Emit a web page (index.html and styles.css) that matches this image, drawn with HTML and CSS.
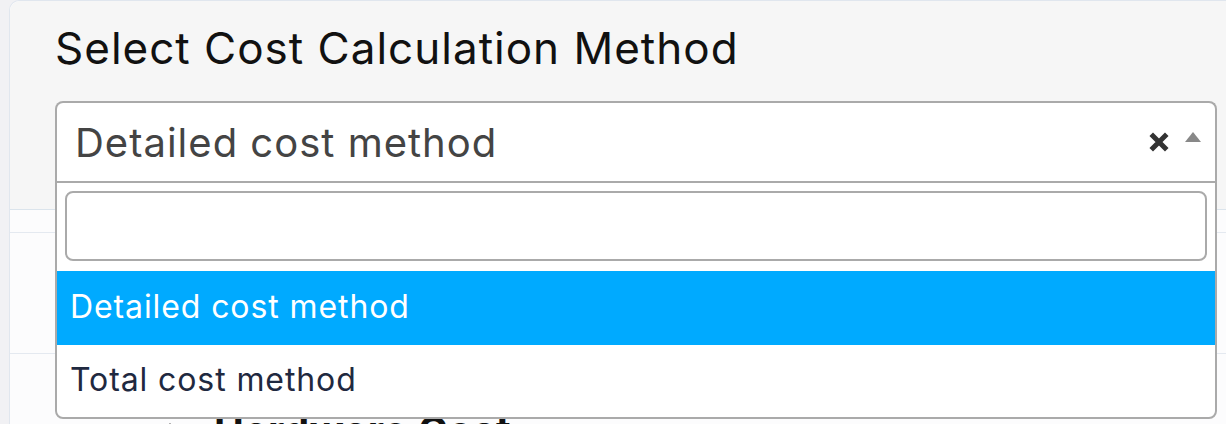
FILE: index.html
```html
<!DOCTYPE html>
<html lang="en">
<head>
  <meta charset="UTF-8" />
  <meta name="viewport" content="width=device-width, initial-scale=1.0"/>
  <title>Cost Calculation</title>
  <link rel="stylesheet" href="styles.css">
</head>
<body>

  <div class="card">
    <div class="card-header">
      <h2 class="card-title">Select Cost Calculation Method</h2>

      <div class="select-wrap">
        <div class="selection">
          <span class="selection-value">Detailed cost method</span>
          <span class="selection-clear">
            <svg width="20" height="20" viewBox="0 0 20 20">
              <path d="M4 4 L16 16 M16 4 L4 16" stroke="#333" stroke-width="5" stroke-linecap="square"/>
            </svg>
          </span>
          <span class="selection-arrow">
            <svg width="16" height="12" viewBox="0 0 16 12">
              <polygon points="0,12 8,2 16,12" fill="#888"/>
            </svg>
          </span>
        </div>

        <div class="dropdown">
          <div class="dropdown-search">
            <input type="text" class="search-field" />
          </div>
          <ul class="results">
            <li class="result-item highlighted">Detailed cost method</li>
            <li class="result-item">Total cost method</li>
          </ul>
        </div>
      </div>
    </div>

    <div class="card-body">
      <div class="cost-row"></div>
      <div class="cost-section">
        <span class="chevron">
          <svg width="24" height="20" viewBox="0 0 24 20">
            <path d="M3 16 L12 7 L21 16" stroke="#111" stroke-width="4" fill="none"/>
          </svg>
        </span>
        <span class="cost-label">Hardware Cost</span>
      </div>
    </div>
  </div>

</body>
</html>
```

FILE: styles.css
```css
body {
  margin: 0;
  padding-left: 9px;
  background: #f1f1f4;
  font-family: Inter, "Open Sans", sans-serif;
  overflow: hidden;
  height: 424px;
}

/* Card */
.card {
  margin-right: -14px;
  background: #fcfcfd;
  border: 1px solid #e0e6ee;
  border-bottom: none;
  border-radius: 10px 10px 0 0;
  height: 460px;
}

.card-header {
  background: #f6f6f6;
  border-bottom: 1px solid #dbe4ec;
  border-radius: 10px 10px 0 0;
  padding: 22px 22px 26px 45px;
}

.card-title {
  margin: 0 0 28px 0;
  font-size: 44px;
  font-weight: 400;
  line-height: 50px;
  color: #111;
  letter-spacing: 1px;
}

/* Select box */
.select-wrap {
  position: relative;
}

.selection {
  display: flex;
  align-items: center;
  height: 80px;
  background: #fff;
  border: 2px solid #aaa;
  border-bottom-width: 0;
  border-radius: 8px 8px 0 0;
  padding: 0 14px 0 18px;
}

.selection-value {
  flex: 1;
  font-size: 40px;
  color: #444;
  letter-spacing: 1px;
  padding-bottom: 2px;
}

.selection-clear {
  display: flex;
  margin-right: 16px;
  margin-top: -2px;
}

.selection-arrow {
  display: flex;
  margin-top: -14px;
}

/* Dropdown */
.dropdown {
  position: absolute;
  top: 80px;
  left: 0;
  right: 0;
  background: #fff;
  border: 2px solid #aaa;
  border-radius: 0 0 8px 8px;
  z-index: 10;
}

.dropdown-search {
  padding: 8px 8px 10px 8px;
}

.search-field {
  display: block;
  box-sizing: border-box;
  width: 100%;
  height: 70px;
  border: 2px solid #aaa;
  border-radius: 8px;
  outline: none;
}

.results {
  list-style: none;
  margin: 0;
  padding: 0;
}

.result-item {
  height: 74px;
  line-height: 72px;
  padding-left: 13px;
  font-size: 32px;
  color: #1f2940;
  letter-spacing: 0.9px;
}

.result-item + .result-item {
  height: 72px;
  line-height: 70px;
}

.result-item.highlighted {
  background: #00aaff;
  color: #fff;
}

/* Body behind the dropdown */
.card-body {
  padding: 22px 0 0 0;
}

.cost-row {
  height: 120px;
  border-top: 1px solid #e4e9f0;
  border-bottom: 1px solid #e4e9f0;
}

.cost-section {
  display: flex;
  align-items: center;
  gap: 32px;
  padding: 52px 0 0 148px;
}

.cost-label {
  font-size: 40px;
  font-weight: 700;
  color: #111;
  letter-spacing: 0.5px;
}
```
